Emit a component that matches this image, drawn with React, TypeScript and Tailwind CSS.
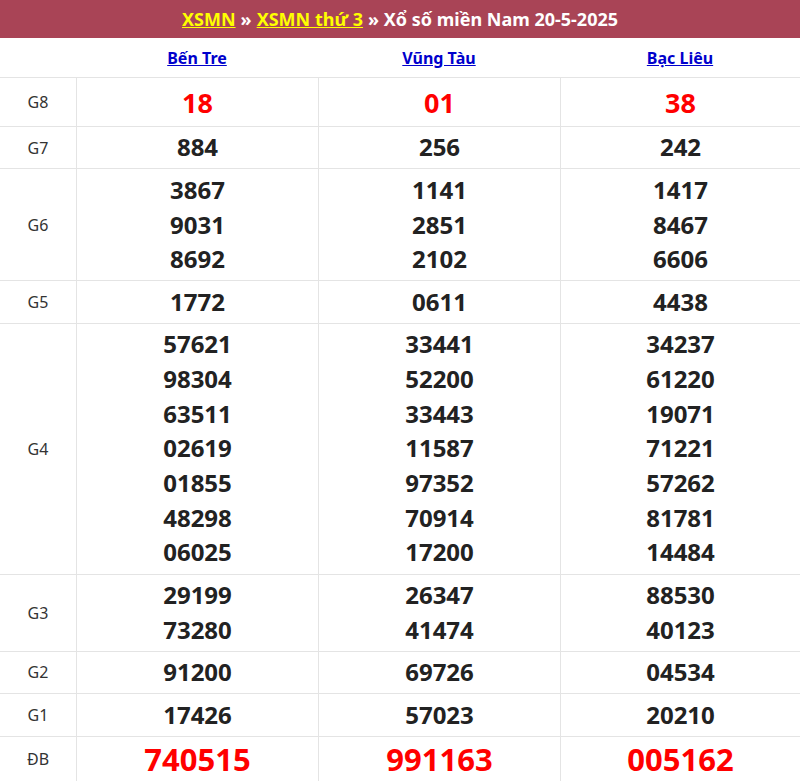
import React from "react";

const provinces = ["Bến Tre", "Vũng Tàu", "Bạc Liêu"];

const rows: { label: string; values: string[][]; kind?: "g8" | "db" }[] = [
  { label: "G8", kind: "g8", values: [["18"], ["01"], ["38"]] },
  { label: "G7", values: [["884"], ["256"], ["242"]] },
  { label: "G6", values: [["3867", "9031", "8692"], ["1141", "2851", "2102"], ["1417", "8467", "6606"]] },
  { label: "G5", values: [["1772"], ["0611"], ["4438"]] },
  {
    label: "G4",
    values: [
      ["57621", "98304", "63511", "02619", "01855", "48298", "06025"],
      ["33441", "52200", "33443", "11587", "97352", "70914", "17200"],
      ["34237", "61220", "19071", "71221", "57262", "81781", "14484"],
    ],
  },
  { label: "G3", values: [["29199", "73280"], ["26347", "41474"], ["88530", "40123"]] },
  { label: "G2", values: [["91200"], ["69726"], ["04534"]] },
  { label: "G1", values: [["17426"], ["57023"], ["20210"]] },
  { label: "ĐB", kind: "db", values: [["740515"], ["991163"], ["005162"]] },
];

export default function App() {
  return (
    <div className="w-[800px] bg-white font-['Liberation_Sans']">
      <div className="h-[38px] bg-[#a94456] flex items-center justify-center text-[18px] font-bold text-white">
        <span className="text-[#ffff00] underline">XSMN</span>
        <span className="mx-[5px]">»</span>
        <span className="text-[#ffff00] underline">XSMN thứ 3</span>
        <span className="ml-[5px]">» Xổ số miền Nam 20-5-2025</span>
      </div>
      <div className="grid grid-cols-[76px_242px_242px_240px] h-[40px] items-center border-b border-[#e4e4e4]">
        <div />
        {provinces.map((p) => (
          <div key={p} className="text-center text-[16px] font-bold text-[#0000cc] underline">
            {p}
          </div>
        ))}
      </div>
      {rows.map((r) => (
        <div key={r.label} className="grid grid-cols-[76px_242px_242px_240px] border-b border-[#e4e4e4]">
          <div className="flex items-center justify-center text-[16px] text-[#333]">{r.label}</div>
          {r.values.map((col, i) => (
            <div
              key={i}
              className={`border-l border-[#e4e4e4] text-center font-bold ${
                r.kind === "db"
                  ? "text-[31px] leading-[40px] text-[#ff0000] py-[2px]"
                  : r.kind === "g8"
                  ? "text-[27px] leading-[41px] text-[#ff0000] py-[3.5px]"
                  : "text-[24px] leading-[34.7px] text-[#222] py-[3.4px]"
              }`}
            >
              {col.map((v) => (
                <div key={v}>{v}</div>
              ))}
            </div>
          ))}
        </div>
      ))}
    </div>
  );
}
